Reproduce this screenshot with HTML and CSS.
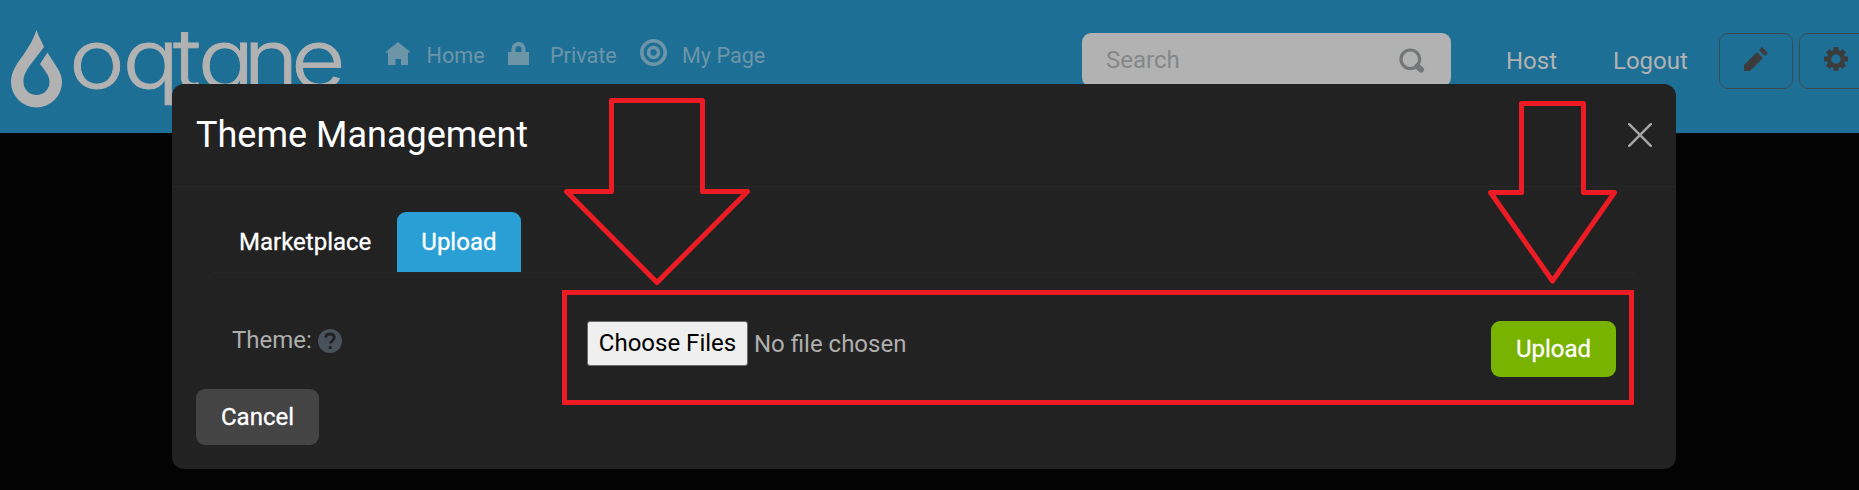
FILE: index.html
```html
<!DOCTYPE html>
<html lang="en">
<head>
<meta charset="utf-8">
<title>Theme Management</title>
<link rel="stylesheet" href="styles.css">
</head>
<body>
<header class="topbar">
  <svg class="logo" width="352" height="112" viewBox="0 0 352 112" role="img" aria-label="oqtane">
    <path class="logo-mark" d="M36.500 30C34 38 30 45 24 54C16 65 11 72 11 82A25.500 25.500 0 0 0 62 82C62 72 55 65 47.500 52.500L40 64C46 72 49.500 76 49.500 82A13 13 0 0 1 23.500 82C23.500 76 25 72 31 64L44 47C41 40 38.500 36 36.500 30Z"/>
    <text class="logo-word" transform="scale(1.15 1)" y="88" x="60 106.500 150.500 172 211.500 253">oqtane</text>
  </svg>
  <nav class="nav">
    <a class="nav-link home"><svg width="26" height="24" viewBox="0 0 26 24"><path d="M13 0L0 10.500H3V23H10.500V17H16V23H23V10.500H26Z"/></svg><span>Home</span></a>
    <a class="nav-link private"><svg width="21" height="24" viewBox="0 0 21 24"><path d="M0 10H3.500V7a7 7 0 0 1 14 0V10H21V23H0ZM7.500 10H13.500V7a3 3 0 0 0-6 0Z"/></svg><span>Private</span></a>
    <a class="nav-link page"><svg width="27" height="27" viewBox="0 0 27 27"><circle class="ring" cx="13.500" cy="13.500" r="11.700"/><circle class="ring" cx="13.500" cy="13.500" r="5"/></svg><span>My Page</span></a>
  </nav>
  <div class="search"><span>Search</span>
    <svg width="26" height="26" viewBox="0 0 26 26"><circle cx="11.300" cy="11.300" r="9.300"/><path d="M18.500 18.500L22 21.500"/></svg>
  </div>
  <a class="account host">Host</a>
  <a class="account logout">Logout</a>
  <button class="tool"><svg width="24" height="24" viewBox="0 0 24 24"><path d="M0 18L13 5L19 11L6 24H0ZM15 3L18 0L24 6L21 9Z"/></svg></button>
  <button class="tool gear"><svg width="24" height="24" viewBox="-12 -12 24 24"><g class="teeth"><path d="M0-12V12M-12 0H12M-8.300-8.300L8.300 8.300M8.300-8.300L-8.300 8.300"/></g><circle r="9.200"/><circle class="hole" r="4.700"/></svg></button>
</header>

<main class="modal">
  <div class="modal-header">
    <h1>Theme Management</h1>
    <svg class="close" width="24" height="24" viewBox="0 0 24 24"><path d="M1.200 1.200L22.800 22.800M22.800 1.200L1.200 22.800"/></svg>
  </div>
  <div class="modal-body">
    <div class="tabs"><a class="tab">Marketplace</a><a class="tab active">Upload</a></div>
    <div class="form-row">
      <label class="label">Theme:
        <svg width="24" height="24" viewBox="0 0 24 24"><circle cx="12" cy="12" r="12"/><path d="M7.800 8.800C7.800 6.200 9.500 5 12 5S16.300 6.400 16.300 8.600C16.300 11.500 12.400 11.500 12.400 14.600"/><path d="M12.200 17V20"/></svg>
      </label>
      <div class="file"><button class="choose">Choose Files</button><span>No file chosen</span></div>
      <button class="btn upload">Upload</button>
    </div>
    <button class="btn cancel">Cancel</button>
  </div>
</main>

<svg class="annotations" width="1859" height="490" viewBox="0 0 1859 490">
  <path d="M611.500 100.500H702.500V191.500H747.500L657 282.500L566.500 191.500H611.500Z"/>
  <path d="M1521.500 103.500H1583.500V192.500H1614.500L1552.500 281L1490.500 192.500H1521.500Z"/>
  <rect class="box" x="564.500" y="292.500" width="1067" height="110"/>
</svg>
</body>
</html>
```
FILE: styles.css
```css
* { box-sizing: border-box; }
body {
  margin: 0;
  height: 490px;
  overflow: hidden;
  position: relative;
  background: #030303;
  color: #aeaeae;
  font: 24px/36px Roboto, sans-serif;
}
button { font: inherit; }
a, button, span, h1 { white-space: nowrap; }
svg { display: block; flex: none; }

.topbar {
  display: flex;
  align-items: flex-start;
  height: 133px;
  background: #1e6f96;
  overflow: hidden;
}
.logo { margin-right: 33px; }
.logo-mark { fill: #b2b2b2; }
.logo-word {
  fill: #b2b2b2;
  stroke: #b2b2b2;
  stroke-width: 0.800;
  font-family: Inter, sans-serif;
  font-size: 82px;
  font-weight: 300;
  font-feature-settings: "cv11";
}
.nav { display: flex; flex: none; width: 697px; padding-top: 37px; font-size: 21.600px; color: #6c95a8; }
.nav-link { display: flex; }
.nav-link span { padding-top: 1px; }
.nav-link svg { fill: #6c95a8; }
.home { width: 123px; }
.home svg { margin: 5px 15.500px 0 0; }
.private { width: 132px; }
.private svg { margin: 5px 21px 0 0; }
.page svg { margin: 2px 15px 0 0; }
.nav-link .ring { fill: none; stroke: #6c95a8; stroke-width: 3.600; }

.search {
  display: flex;
  justify-content: space-between;
  flex: none;
  width: 369px;
  height: 54px;
  margin-top: 33px;
  padding: 9px 26px 9px 24px;
  border-radius: 9px;
  background: #b2b2b2;
  color: #858888;
}
.search svg { margin-top: 6px; fill: none; stroke: #747777; stroke-width: 3.200; }
.search path { stroke-width: 6; stroke-linecap: round; }
.account { margin-top: 43px; color: #b2b2b2; }
.host { width: 107px; margin-left: 55px; flex: none; }
.logout { width: 106px; flex: none; }
.tool {
  flex: none;
  width: 74px;
  height: 56px;
  margin: 33px 6px 0 0;
  padding: 13px 24px;
  border: 1px solid #3b4a52;
  border-radius: 9px;
  background: none;
}
.tool svg { fill: #3c3c3c; margin-top: -5px; }
.gear .teeth path { stroke: #3c3c3c; stroke-width: 5; }
.gear .hole { fill: #1e6f96; }

.modal {
  position: absolute;
  left: 172px;
  top: 84px;
  width: 1504px;
  height: 385px;
  border-radius: 12px;
  background: #222;
}
.modal-header {
  display: flex;
  justify-content: space-between;
  height: 103px;
  padding: 24px;
  border-bottom: 1px solid #282828;
}
h1 { margin: 0; font-size: 36px; line-height: 54px; font-weight: 400; color: #fff; }
.close { margin-top: 15px; fill: none; stroke: #a7a7a7; stroke-width: 2.400; stroke-linecap: round; }
.modal-body { padding: 25px 24px 0; }
.tabs { display: flex; margin: 0 18px; padding-left: 1px; height: 61px; border-bottom: 1px solid #282828; }
.tab { padding: 12px 24px; color: #fff; -webkit-text-stroke: 0.300px #fff; }
.tab.active { width: 124px; margin-left: 2px; height: 60px; border-radius: 9px 9px 0 0; background: #2a9fd6; }
.form-row { display: flex; align-items: flex-start; height: 116px; padding: 48px 36px 0 36px; }
.label { display: flex; gap: 6px; width: 355px; padding-top: 1px; }
.label svg { margin-top: 7px; fill: #49525b; }
.label path { fill: none; stroke: #202326; stroke-width: 2.800; }
.file { display: flex; flex: 1; gap: 6px; }
.file span { padding-top: 5px; }
.choose {
  width: 161px;
  height: 45px;
  padding: 0;
  border: 1px solid #6b6b6b;
  border-radius: 3px;
  background: #efefef;
  color: #000;
  line-height: 43px;
}
.btn { height: 56px; padding: 0; border: 0; border-radius: 9px; color: #fff; -webkit-text-stroke: 0.300px #fff; }
.upload { width: 125px; background: #77b300; }
.cancel { width: 123px; background: #444; }
.annotations { position: absolute; inset: 0; pointer-events: none; }
.annotations path, .box { fill: none; stroke: #ed1c24; stroke-width: 5; stroke-linejoin: round; }
.annotations .box { stroke-linejoin: miter; }
```
